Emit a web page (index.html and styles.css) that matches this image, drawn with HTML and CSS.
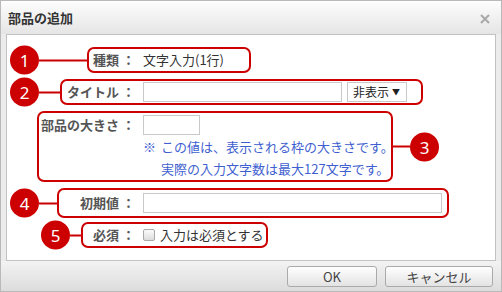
FILE: index.html
```html
<!DOCTYPE html>
<html lang="ja">
<head>
  <meta charset="UTF-8" />
  <meta name="viewport" content="width=device-width, initial-scale=1.0"/>
  <link rel="stylesheet" href="styles.css">
</head>
<body>
  <div class="dialog">
    <div class="titlebar">
      <h1>部品の追加</h1>
      <svg class="close" viewBox="0 0 10 10" width="10" height="10">
        <path d="M1 1L9 9M9 1L1 9" stroke="#a8a8a8" stroke-width="2" />
      </svg>
    </div>

    <div class="panel">
      <div class="box row-kind">
        <div class="label">種類<span class="colon">：</span></div>
        <span class="value">文字入力(1行)</span>
        <span class="tag"><span class="num">1</span><span class="stem"></span></span>
      </div>

      <div class="box row-title">
        <div class="label">タイトル<span class="colon">：</span></div>
        <input class="text w-title" type="text">
        <div class="select">非表示<span class="arrow">▼</span></div>
        <span class="tag"><span class="num">2</span><span class="stem"></span></span>
      </div>

      <div class="box row-size">
        <div class="label">部品の大きさ<span class="colon">：</span></div>
        <div class="field">
          <input class="text w-size" type="text">
          <p class="note"><span class="mark">※</span><span>この値は、表示される枠の大きさです。<br>実際の入力文字数は最大127文字です。</span></p>
        </div>
        <span class="tag after"><span class="num">3</span><span class="stem"></span></span>
      </div>

      <div class="box row-initial">
        <div class="label">初期値<span class="colon">：</span></div>
        <input class="text w-initial" type="text">
        <span class="tag"><span class="num">4</span><span class="stem"></span></span>
      </div>

      <div class="box row-required">
        <div class="label">必須<span class="colon">：</span></div>
        <label class="check"><input type="checkbox">入力は必須とする</label>
        <span class="tag"><span class="num">5</span><span class="stem"></span></span>
      </div>
    </div>

    <div class="footer">
      <button class="btn ok">OK</button>
      <button class="btn cancel">キャンセル</button>
    </div>
  </div>
</body>
</html>
```

FILE: styles.css
```css
* {
  box-sizing: border-box;
}
body {
  margin: 0;
  font-family: "Noto Sans CJK JP", "Noto Sans", sans-serif;
  font-size: 13px;
  color: #333;
}
.dialog {
  width: 502px;
  height: 292px;
  border: 1px solid #b9b9b9;
  background: #ececec;
  display: flex;
  flex-direction: column;
}
.titlebar {
  height: 33px;
  flex: none;
  display: flex;
  align-items: center;
  justify-content: space-between;
  padding: 0 11px 0 7px;
  background: linear-gradient(#fdfdfd, #e5e5e5);
}
.titlebar h1 {
  margin: 0;
  font-size: 13px;
  font-weight: bold;
  line-height: 1;
  color: #333;
}
.close {
  margin-top: 3px;
}

.panel {
  height: 227px;
  flex: none;
  margin: 0 5px;
  background: #fff;
  border: 1px solid #c2c2c2;
  padding-top: 12px;
  display: flex;
  flex-direction: column;
  gap: 6px;
}

/* red annotation frames around each form row */
.box {
  position: relative;
  display: flex;
  align-items: center;
  margin-left: var(--x);
  width: var(--w);
  height: var(--h);
  border: 2px solid #c00;
  border-radius: 7px;
  padding: 0 4px;
  white-space: nowrap;
}
.box > * {
  flex: none;
}
.row-kind { --x: 80px; --w: 164px; --h: 26px; --stem: 50px; }
.row-title { --x: 53px; --w: 363px; --h: 26px; --stem: 23px; }
.row-size { --x: 30px; --w: 356px; --h: 71px; --stem: 19px; align-items: flex-start; padding-top: 2px; }
.row-initial { --x: 50px; --w: 392px; --h: 30px; --stem: 20px; }
.row-required { --x: 74px; --w: 187px; --h: 26px; --stem: 13px; margin-top: -2px; }

.label {
  width: calc(122px - var(--x));
  margin-right: 8px;
  display: flex;
  justify-content: flex-end;
  font-weight: bold;
  color: #555;
  line-height: 20px;
}
.colon {
  margin-left: 3px;
}
.value {
  line-height: 20px;
  color: #333;
}

.text {
  height: 20px;
  border: 1px solid #c9c9c9;
  background: #fff;
  padding: 0 4px;
  font: inherit;
  outline: none;
}
.w-title { width: 199px; }
.w-size { width: 57px; display: block; }
.w-initial { width: 299px; }

.select {
  width: 60px;
  height: 20px;
  margin-left: 5px;
  border: 1px solid #c9c9c9;
  background: #fff;
  display: flex;
  align-items: center;
  justify-content: space-between;
  padding: 0 6px 0 5px;
  font-size: 12px;
  line-height: 1;
  color: #222;
}
.arrow {
  font-size: 8px;
  color: #222;
}

.note {
  margin: 1px 0 0;
  display: flex;
  font-size: 13px;
  line-height: 22px;
  color: #3f5fd0;
}
.mark {
  width: 18px;
  flex: none;
}

.check {
  display: flex;
  align-items: center;
  gap: 5px;
  line-height: 20px;
}
.check input {
  appearance: none;
  margin: 0;
  width: 12px;
  height: 12px;
  border: 1px solid #a9a9a9;
  border-radius: 2px;
  background: linear-gradient(#fbfbfb, #dcdcdc);
}

/* numbered markers with their connector line */
.tag {
  position: absolute;
  top: 50%;
  right: 100%;
  transform: translateY(-50%);
  display: flex;
  align-items: center;
}
.tag.after {
  right: auto;
  left: 100%;
  flex-direction: row-reverse;
}
.num {
  width: 29px;
  height: 29px;
  border-radius: 50%;
  background: #c00;
  color: #fff;
  font-family: "Noto Sans", sans-serif;
  font-size: 17px;
  line-height: 29px;
  text-align: center;
}
.stem {
  width: var(--stem);
  height: 2px;
  background: #c00;
}

.footer {
  flex: 1;
  display: flex;
  justify-content: flex-end;
  align-items: flex-start;
  gap: 8px;
  padding: 5px 8px 0 0;
  background: linear-gradient(#f3f3f3, #dcdcdc);
}
.btn {
  height: 21px;
  border: 1px solid #aaa;
  border-radius: 3px;
  background: linear-gradient(#fefefe, #e3e3e3);
  font: inherit;
  color: #444;
  padding: 0;
  line-height: 1;
}
.ok { width: 90px; }
.cancel { width: 108px; }
```
